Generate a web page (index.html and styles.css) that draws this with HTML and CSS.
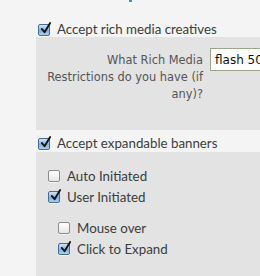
FILE: index.html
```html
<!DOCTYPE html>
<html>
<head>
<meta charset="utf-8">
<link rel="stylesheet" href="styles.css">
</head>
<body>
<div class="page">
  <div class="topmark"><span class="mark"></span></div>
  <label class="opt head">
    <span class="cb on"><svg viewBox="0 0 14 14" class="tick"><path d="M3 7.5 L6 11 L12 1" /></svg></span>
    <span>Accept rich media creatives</span>
  </label>
  <div class="panel p1">
    <div class="field">
      <div class="flabel">What Rich Media Restrictions do you have (if any)?</div>
      <div class="input">flash 50</div>
    </div>
  </div>
  <label class="opt head h2">
    <span class="cb on"><svg viewBox="0 0 14 14" class="tick"><path d="M3 7.5 L6 11 L12 1" /></svg></span>
    <span>Accept expandable banners</span>
  </label>
  <div class="panel p2">
    <label class="opt sub">
      <span class="cb"></span>
      <span>Auto Initiated</span>
    </label>
    <label class="opt sub">
      <span class="cb on"><svg viewBox="0 0 14 14" class="tick"><path d="M3 7.5 L6 11 L12 1" /></svg></span>
      <span>User Initiated</span>
    </label>
    <div class="nested">
      <label class="opt sub">
        <span class="cb"></span>
        <span>Mouse over</span>
      </label>
      <label class="opt sub">
        <span class="cb on"><svg viewBox="0 0 14 14" class="tick"><path d="M3 7.5 L6 11 L12 1" /></svg></span>
        <span>Click to Expand</span>
      </label>
    </div>
  </div>
</div>
</body>
</html>
```
FILE: styles.css
```css
html, body {
  margin: 0;
  padding: 0;
  background: #f4f4f4;
  overflow: hidden;
}
.page {
  width: 260px;
  height: 276px;
  font-family: "Lato", "Open Sans", sans-serif;
  color: #3c3c3c;
}
.topmark {
  height: 20px;
  padding-left: 129px;
}
.mark {
  display: block;
  width: 3px;
  height: 2px;
  background: #4a8ab8;
}
.opt {
  display: flex;
  align-items: center;
  gap: 7px;
  font-size: 13.3px;
  height: 21px;
}
.head {
  padding-left: 38px;
  height: 17px;
  align-items: flex-end;
}
.head.h2 {
  height: 22px;
  align-items: flex-end;
  box-sizing: border-box;
  padding-bottom: 1px;
}
.cb {
  position: relative;
  flex: none;
  width: 10px;
  height: 10px;
  margin-bottom: 1px;
  border: 1px solid #8c8c8c;
  border-radius: 2px;
  background: linear-gradient(#ffffff, #e6e6e6);
  box-shadow: 0 1px 0 rgba(255,255,255,0.6);
}
.sub .cb {
  margin-bottom: 0;
}
.cb.on {
  border-color: #4a6d95;
  background: linear-gradient(#cfe4f8, #7fb0e2 55%, #a9d0f3);
}
.tick {
  position: absolute;
  left: 0px;
  top: -3px;
  width: 13px;
  height: 13px;
  overflow: visible;
}
.tick path {
  fill: none;
  stroke: #111;
  stroke-width: 2;
  stroke-linecap: round;
  stroke-linejoin: round;
}
.panel {
  margin-left: 36px;
  background: #e3e3e3;
}
.p1 {
  height: 93px;
}
.field {
  display: flex;
  align-items: flex-start;
  gap: 7px;
  padding-top: 11px;
}
.flabel {
  width: 160px;
  padding-left: 7px;
  flex: none;
  margin-top: 4px;
  text-align: right;
  font-family: "DejaVu Sans", sans-serif;
  font-size: 11.4px;
  line-height: 17px;
  color: #555;
}
.input {
  flex: none;
  width: 60px;
  height: 23px;
  box-sizing: border-box;
  border: 1px solid #9aa58a;
  background: #fff;
  padding: 3px 4px;
  font-family: "DejaVu Sans", sans-serif;
  font-size: 12px;
  line-height: 16px;
  color: #111;
  white-space: nowrap;
  overflow: hidden;
}
.p2 {
  height: 124px;
  padding-top: 13px;
  box-sizing: border-box;
}
.sub {
  padding-left: 12px;
  height: 21px;
}
.nested {
  padding-top: 10px;
  padding-left: 10px;
}
```
